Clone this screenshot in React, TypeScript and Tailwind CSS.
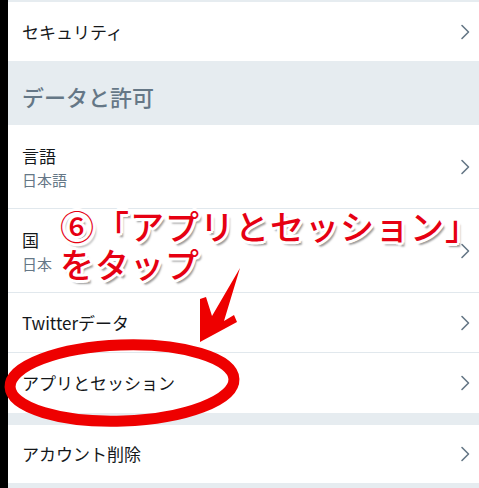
import React from 'react'

const font = { fontFamily: '"Noto Sans CJK JP", "Noto Sans", sans-serif' }

function Chevron() {
  return (
    <svg width="10" height="16" viewBox="0 0 10 16" className="shrink-0">
      <polyline points="2,1.5 8.5,8 2,14.5" fill="none" stroke="#657786" strokeWidth="1.6" strokeLinecap="round" strokeLinejoin="round" />
    </svg>
  )
}

function Row({ title, sub, h }: { title: string; sub?: string; h: string }) {
  return (
    <div className={`flex items-center justify-between bg-white pl-[14px] pr-[9px] ${h}`}>
      <div className="flex flex-col">
        <span className="text-[17px] leading-[26px] text-[#14171a]">{title}</span>
        {sub && <span className="text-[15px] leading-[22px] text-[#657786]">{sub}</span>}
      </div>
      <Chevron />
    </div>
  )
}

const Line = () => <div className="h-px bg-[#e1e8ed]" />

export default function App() {
  const outline =
    '[text-shadow:2px_0_0_#fff,-2px_0_0_#fff,0_2px_0_#fff,0_-2px_0_#fff,2px_2px_0_#fff,-2px_-2px_0_#fff,2px_-2px_0_#fff,-2px_2px_0_#fff,3px_0_0_#fff,-3px_0_0_#fff,0_3px_0_#fff,0_-3px_0_#fff,3px_4px_2px_#9a9a9a]'

  return (
    <div className="relative flex h-[488px] w-[479px] overflow-hidden bg-white" style={font}>
      <div className="w-[8px] shrink-0 bg-black" />
      <div className="flex flex-1 flex-col">
        <div className="h-[2px] bg-[#e6ecf0]" />
        <Row title="セキュリティ" h="h-[59px]" />
        <div className="flex h-[64px] items-center bg-[#e6ecf0] pl-[14px] pt-[6px]">
          <span className="text-[22px] font-medium text-[#657786]">データと許可</span>
        </div>
        <Row title="言語" sub="日本語" h="h-[83px]" />
        <Line />
        <Row title="国" sub="日本" h="h-[83px]" />
        <Line />
        <Row title="Twitterデータ" h="h-[59px]" />
        <Line />
        <Row title="アプリとセッション" h="h-[60px]" />
        <div className="h-[12px] bg-[#e6ecf0]" />
        <Row title="アカウント削除" h="h-[58px]" />
        <div className="flex-1 bg-[#e6ecf0]" />
      </div>

      {/* annotation */}
      <div
        className={`absolute left-[60px] top-[207px] whitespace-nowrap text-[34px] font-medium leading-[38px] tracking-[1px] text-[#e60012] ${outline}`}
      >
        <div>⑥「アプリとセッション」</div>
        <div>をタップ</div>
      </div>

      <svg className="absolute left-0 top-0" width="479" height="488" viewBox="0 0 479 488">
        <polygon
          points="240,268 224,321 234,315 237,322 200,342 200,299 206,297 212,316"
          fill="#ee0000"
        />
        <ellipse cx="122" cy="383" rx="112" ry="38" fill="none" stroke="#ee0000" strokeWidth="11" transform="rotate(-2 122 383)" />
      </svg>
    </div>
  )
}
